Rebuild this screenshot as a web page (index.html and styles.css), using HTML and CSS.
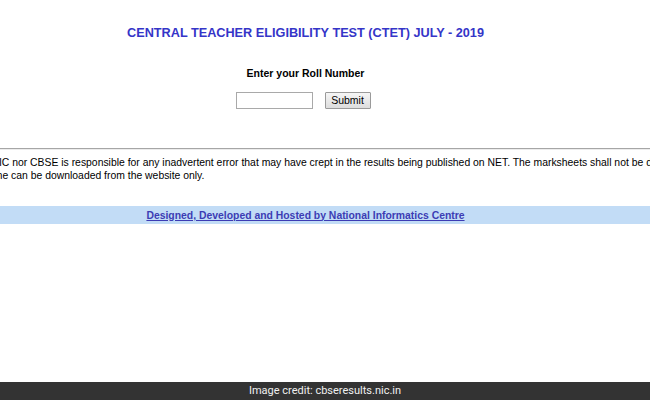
FILE: index.html
```html
<!DOCTYPE html>
<html>
<head>
<meta charset="utf-8">
<link rel="stylesheet" href="styles.css">
</head>
<body>
<div class="page">
  <div class="column">
    <h1 class="title">CENTRAL TEACHER ELIGIBILITY TEST (CTET) JULY - 2019</h1>
    <div class="label">Enter your Roll Number</div>
    <form class="roll-form">
      <input class="roll-input" type="text">
      <button class="submit" type="button">Submit</button>
    </form>
  </div>
  <div class="rule"></div>
  <div class="disclaimer">
    <div class="line">Neither NIC nor CBSE is responsible for any inadvertent error that may have crept in the results being published on NET. The marksheets shall not be dispatched to the candidates.</div>
    <div class="line line-second">The same can be downloaded from the website only.</div>
  </div>
  <div class="footer-bar">
    <div class="column">
      <a class="footer-link" href="#">Designed, Developed and Hosted by National Informatics Centre</a>
    </div>
  </div>
</div>
<div class="credit">Image credit: cbseresults.nic.in</div>
</body>
</html>
```
FILE: styles.css
```css
html, body {
  margin: 0;
  padding: 0;
  background: #ffffff;
  width: 650px;
  height: 400px;
  overflow: hidden;
}
body {
  font-family: "Liberation Sans", Arial, sans-serif;
  color: #000;
}
.page {
  height: 382px;
  overflow: hidden;
}
.column {
  width: 611px;
  text-align: center;
}
.title {
  margin: 0;
  padding-top: 26px;
  font-size: 12.7px;
  line-height: 15px;
  font-weight: bold;
  color: #3535c8;
}
.label {
  margin-top: 26px;
  font-size: 10.5px;
  line-height: 13px;
  font-weight: bold;
}
.roll-form {
  margin: 12px 0 0 0;
  display: flex;
  justify-content: center;
  align-items: center;
  gap: 12px;
  padding-right: 5px;
}
.roll-input {
  box-sizing: border-box;
  width: 77px;
  height: 17px;
  margin: 0;
  border: 1px solid #a9a9a9;
  padding: 0;
  background: #fff;
}
.submit {
  box-sizing: border-box;
  width: 46px;
  height: 17px;
  margin: 0;
  padding: 0;
  border: 1px solid #9a9a9a;
  border-radius: 1px;
  background: linear-gradient(#f6f6f6, #dddddd);
  font-family: "Liberation Sans", Arial, sans-serif;
  font-size: 10.5px;
  line-height: 15px;
  color: #000;
}
.rule {
  margin-top: 39px;
  height: 1px;
  background: #a6a6a6;
  border-bottom: 1px solid #ececec;
}
.disclaimer {
  margin-top: 6px;
  margin-left: -45px;
  font-size: 10.4px;
  line-height: 13px;
  white-space: nowrap;
}
.line-second {
  margin-left: 7px;
}
.footer-bar {
  margin-top: 24px;
  height: 18px;
  box-sizing: border-box;
  padding-bottom: 3px;
  background: #c2dcf6;
  display: flex;
  align-items: center;
}
.footer-link {
  font-size: 10.4px;
  font-weight: bold;
  color: #3c3cb4;
  text-decoration: underline;
}
.credit {
  height: 18px;
  background: #333333;
  color: #f0f0f0;
  font-family: Roboto, "Liberation Sans", sans-serif;
  font-size: 11px;
  line-height: 18px;
  text-align: center;
}
```
